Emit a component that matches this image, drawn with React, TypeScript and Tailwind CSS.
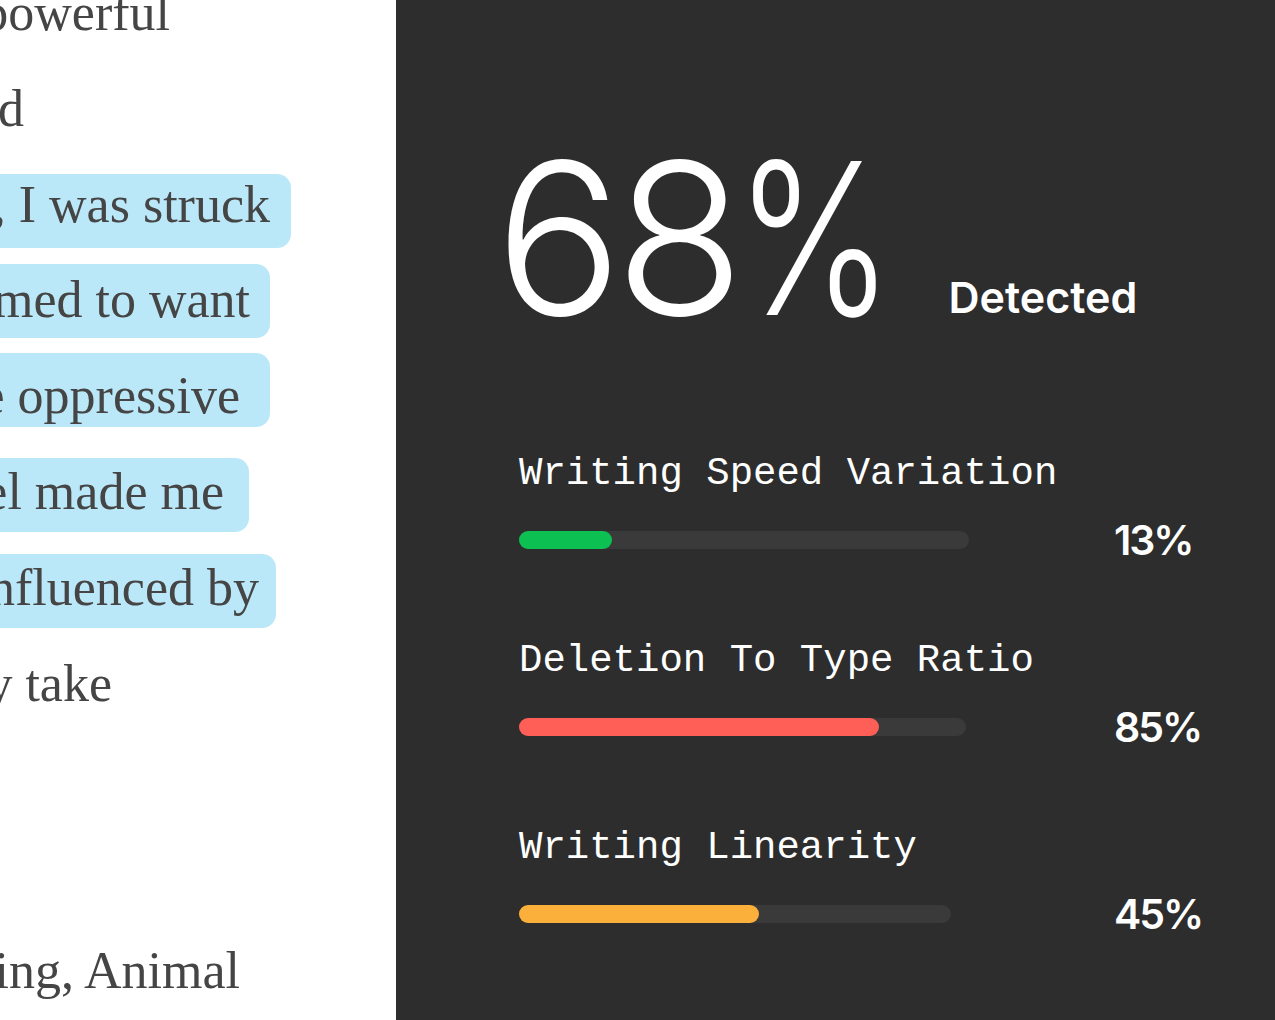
import React from "react";

type Line = {
  text: string;
  mr: string;
  hl?: string;
};

// essay lines, clipped on the left by the panel edge
const lines: Line[] = [
  { text: "Orwell's allegory was the most powerful", mr: "mr-[226px]" },
  { text: "of the books we read this year and", mr: "mr-[372px]" },
  { text: "While reading the novel, I was struck", mr: "mr-[105px]", hl: "pt-[2px] pb-[15px] pr-[21px]" },
  { text: "by how the pigs seemed to want", mr: "mr-[126px]", hl: "pt-[7px] pb-[10px] pr-[20px]" },
  { text: "power and became oppressive", mr: "mr-[126px]", hl: "pt-[14px] pb-[3px] pr-[30px]" },
  { text: "rulers. This level made me", mr: "mr-[147px]", hl: "pt-[5px] pb-[12px] pr-[25px]" },
  { text: "think about how I am influenced by", mr: "mr-[120px]", hl: "pt-[5px] pb-[12px] pr-[17px]" },
  { text: "leaders and the actions they take", mr: "mr-[284px]" },
  { text: "", mr: "mr-0" },
  { text: "", mr: "mr-0" },
  { text: "In conclusion, after reading, Animal", mr: "mr-[156px]" },
];

const metrics = [
  { label: "Writing Speed Variation", value: "13%", track: "w-[450px]", fill: "w-[93px] bg-[#0cc152]" },
  { label: "Deletion To Type Ratio", value: "85%", track: "w-[447px]", fill: "w-[360px] bg-[#ff5f57]" },
  { label: "Writing Linearity", value: "45%", track: "w-[432px]", fill: "w-[240px] bg-[#fbb03b]" },
];

export default function App() {
  return (
    <div className="flex h-[1020px] w-[1275px] overflow-hidden">
      <div className="w-[396px] shrink-0 overflow-hidden bg-white">
        <div className="mt-[-35px] flex flex-col font-['Liberation_Serif',serif] text-[52px] text-[#454545]">
          {lines.map((l, i) => (
            <div key={i} className="flex h-[95.8px] justify-end">
              <div className={`whitespace-nowrap leading-[95.8px] ${l.mr}`}>
                {l.hl ? (
                  <span className={`rounded-[14px] bg-[#bbe8f8] ${l.hl}`}>{l.text}</span>
                ) : (
                  l.text
                )}
              </div>
            </div>
          ))}
        </div>
      </div>

      <div className="flex-1 bg-[#2d2d2d] pl-[123px] pt-[132px] text-white">
        <div className="-ml-[24px] flex items-baseline font-['Inter',sans-serif]">
          <span className="text-[212px] font-light leading-none tracking-[-0.035em]">
            68
            <span className="ml-[-2px] inline-block origin-left scale-x-[0.8]">%</span>
          </span>
          <span className="ml-[22px] -translate-y-[2px] text-[43px] font-semibold leading-none">Detected</span>
        </div>

        <div className="mt-[111px] flex flex-col gap-[93px]">
          {metrics.map((m) => (
            <div key={m.label}>
              <div className="font-['Liberation_Mono',monospace] text-[39px] leading-none whitespace-nowrap">
                {m.label}
              </div>
              <div className="mt-[37px] flex h-[18px] items-center">
                <div className="w-[595px] shrink-0">
                  <div className={`h-[18px] rounded-full bg-[#3a3a3a] ${m.track}`}>
                    <div className={`h-full rounded-full ${m.fill}`} />
                  </div>
                </div>
                <span className="font-['Inter',sans-serif] text-[41px] font-semibold leading-none tracking-[-0.05em]">
                  {m.value}
                </span>
              </div>
            </div>
          ))}
        </div>
      </div>
    </div>
  );
}
